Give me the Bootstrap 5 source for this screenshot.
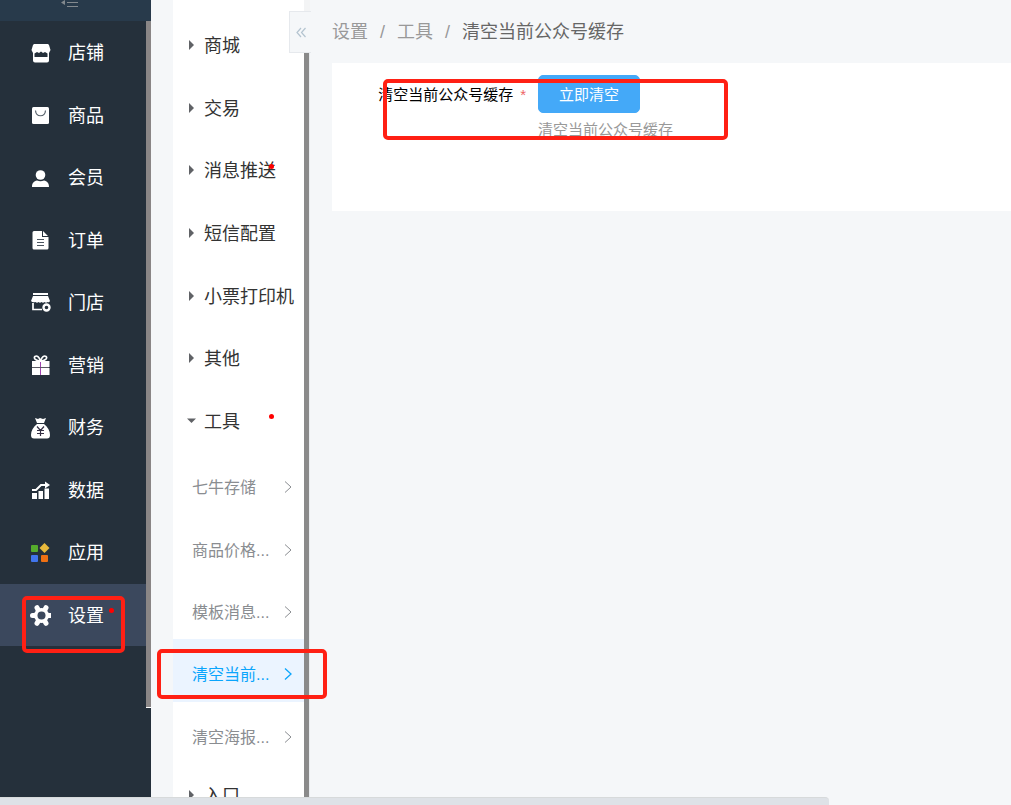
<!DOCTYPE html>
<html lang="zh-CN">
<head>
<meta charset="utf-8">
<meta name="viewport" content="width=device-width, initial-scale=1">
<title>清空当前公众号缓存</title>
<link href="https://cdn.jsdelivr.net/npm/bootstrap@5.3.0/dist/css/bootstrap.min.css" rel="stylesheet">
<style>
body{font-family:"Liberation Sans","Noto Sans CJK SC",sans-serif;background:#f5f7f9;font-size:18px;line-height:24px}
a{text-decoration:none}
.side{width:146px;background:#25303b}
.side-top{height:21px;background:#283a4b}
.side-top button{display:block;margin-left:61px;line-height:0}
.side-menu{display:grid;grid-auto-rows:1fr;height:625px}
.side-menu a{color:#fff;padding:2px 0 0 30px;gap:17px}
.side-menu a.active{background:#3b485d}
.side-menu svg{width:21px;height:21px;flex:none}
.track{width:5px;flex:none;background:#25303b}
.track-top{height:21px;background:#283a4b}
.thumb{height:687px;background:#8a8686;border-bottom:1px solid #fff}
.submenu{width:131px;margin-left:22px;background:#fff;padding-top:14px}
.groups,.tools{display:grid;grid-auto-rows:1fr}
.groups{height:438px}
.tools{height:312px}
.last-group{height:62px}
.group-link{color:#333;padding:2px 0 0 14px;gap:8px;white-space:nowrap}
.group-link svg{width:9px;height:10px;flex:none;margin-bottom:2px}
.tools a{color:#8a8d91;font-size:16px;padding:10px 11px 0 19px;white-space:nowrap}
.tools a.active{background:#ebf4ff;color:#0aa5fc}
.tools svg{width:10px;height:14px;flex:none;margin-bottom:2px}
.sub-track{width:6px;flex:none;background:linear-gradient(to right,#8a8a8a 5px,#e9ecef 5px)}
.sub-track-top{height:53px;background:#f3f4f5}
.collapse-btn{position:absolute;left:289px;top:11px;width:22px;height:42px;background:#f5f7f9;border:1px solid #e6e9ed;border-right:0}
.dot{position:absolute;width:5px;height:5px;border-radius:50%;background:red}
.side-menu .dot{left:109px;top:24px}
.groups .dot{left:96px;top:25px}
.callout{position:absolute;border:4px solid #ff2014;border-radius:5px;pointer-events:none;z-index:3}
.callout-side{left:22px;top:12px;width:103px;height:57px}
.callout-sub{left:-16px;top:10px;width:170px;height:50px}
.callout-form{left:51px;top:16px;width:345px;height:61px}
.content-area{margin-left:22px}
.crumbs{height:63px;--bs-breadcrumb-divider-color:#999;--bs-breadcrumb-item-padding-x:12px}
.crumbs a{color:#999}
.crumbs .active{color:#666}
.panel{background:#fff;height:148px;padding-top:12px}
.form-line{font-size:15px;line-height:22px}
.form-name{width:206px;padding:9px 12px 0 0;text-align:right;color:#000}
.star{color:#e66;font-size:15px;margin-left:7px}
.btn-clear{--bs-btn-bg:#44a9f8;--bs-btn-color:#fff;--bs-btn-border-color:#44a9f8;--bs-btn-hover-bg:#3b9ce8;--bs-btn-hover-color:#fff;--bs-btn-font-size:15px;--bs-btn-line-height:22px;--bs-btn-border-radius:5px;padding:8px 20px 6px 20px}
.hint{color:#999;margin-top:6px}
.page-scroll{height:8px;flex:none}
.page-scroll div{width:82%;height:8px;background:#dee2e7;border-top:1px solid #d7dadb;border-top-right-radius:4px}
</style>
</head>
<body>
<div class="vh-100 d-flex flex-column overflow-hidden">
<div class="d-flex flex-grow-1 overflow-hidden position-relative">
  <nav class="side flex-shrink-0" aria-label="主菜单">
    <div class="side-top"><button class="btn p-0 border-0" aria-label="收起菜单"><svg width="18" height="8" fill="none" stroke="#83898e"><path d="M4 0v5L0 2.500z" fill="#83898e" stroke="none"/><path d="M6 2.500h11M6 6.500h11"/></svg></button></div>
    <div class="side-menu">
      <a href="#" class="d-flex align-items-center"><svg viewBox="0 0 21 21"><path fill="#fff" d="M4 1h14l1 1 1.500 5-1.500 3v7.500q0 2-2 2H5q-2 0-2-2V10L1.500 7 3 2z"/><path fill="#25303b" d="M4.500 10.500L7 9l2 1 2-1.500 2 1.500 2-1 2.500 1.500v3.500h-13z"/></svg>店铺</a>
      <a href="#" class="d-flex align-items-center"><svg viewBox="0 0 21 21"><rect x="2" y="2" width="17" height="17" rx="1.500" fill="#fff"/><path d="M5.500 5.500c.5 7 9.500 7 10 0" fill="none" stroke="#59636c" stroke-width="1.200"/></svg>商品</a>
      <a href="#" class="d-flex align-items-center"><svg viewBox="0 0 21 21" fill="#fff"><circle cx="10.500" cy="7" r="4.800"/><path d="M2 19c0-4 2-6 5-6.500q3.500 1.500 7 0c3 .5 5 2.500 5 6.500z"/></svg>会员</a>
      <a href="#" class="d-flex align-items-center"><svg viewBox="0 0 21 21"><path fill="#fff" d="M4 1h8v6h6.500v11q0 1.500-1.500 1.500H4Q2.500 19.500 2.500 18V2.500Q2.500 1 4 1zM13 1l5 5h-5z"/><path d="M7 9.500h7M7 12.500h7M7 15.500h7" stroke="#4b5560" stroke-width="1.200"/></svg>订单</a>
      <a href="#" class="d-flex align-items-center"><svg viewBox="0 0 21 21"><path fill="#fff" d="M3 0h15v2H3zM3 3h15l2 5q-1 2-2.500 1-1.500 1.500-3 0-1.500 1.500-3 0-1.500 1.500-3 0-1.500 1.500-3 0-3 1-4.500-1z"/><path d="M3 10v6.500h9" fill="none" stroke="#fff" stroke-width="1.700"/><circle cx="16.500" cy="14.500" r="3" fill="#25303b" stroke="#fff" stroke-width="2.400"/></svg>门店</a>
      <a href="#" class="d-flex align-items-center"><svg viewBox="0 0 21 21"><path fill="#fff" d="M2 6h17.500v6H2zM2 13h17.500v7H2z"/><path d="M10.500 6C9 2 7 0 5 1.500S6 6 10.500 6C12 2 14 0 16 1.500S15 6 10.500 6" fill="none" stroke="#fff" stroke-width="1.600"/><path d="M10.500 7v13" stroke="#a044b0"/><path d="M2 12.500h17" stroke="#5a5962"/></svg>营销</a>
      <a href="#" class="d-flex align-items-center"><svg viewBox="0 0 21 21"><path fill="#fff" d="M5 0l3 1 2-1 3 1 3-1-2 5H7zM7 6h7c4 3 6 7 6 11q0 3.500-3 3.500H4q-3 0-3-3.500c0-4 2-8 6-11z"/><path d="M7 8.500l3.500 4 3.500-4M10.500 12.500V18M7 12.500h7M7 15.500h7" fill="none" stroke="#343044" stroke-width="1.200"/></svg>财务</a>
      <a href="#" class="d-flex align-items-center"><svg viewBox="0 0 21 21"><path fill="#fff" d="M2 13h5v6H2zM8.500 11h4.500v8H8.500zM14.500 8.500h4.500V19h-4.500z"/><path d="M2 10h4l5-5h5" fill="none" stroke="#fff" stroke-width="2"/><path d="M15 1.500L20 5l-5 3.500z" fill="#fff"/></svg>数据</a>
      <a href="#" class="d-flex align-items-center"><svg viewBox="0 0 21 21"><rect x="1" y="2" width="7" height="7" rx="1" fill="#55ab2c"/><rect x="1" y="12" width="7" height="7" rx="1" fill="#4175ec"/><rect x="11" y="12" width="7" height="7" rx="1" fill="#ef7013"/><path d="M14.500 0l5 5-5 5-5-5z" fill="#e8b93c"/></svg>应用</a>
      <a href="#" class="active d-flex align-items-center position-relative"><svg viewBox="0 0 21 21"><path d="M2.500 10.500h18M7 2.700l9 15.600M16 2.700L7 18.300" stroke="#fff" stroke-width="5" stroke-linecap="round"/><circle cx="11.500" cy="10.500" r="7.500" fill="#fff"/><circle cx="11.500" cy="10.500" r="4" fill="#3b485d"/></svg>设置<span class="dot"></span><span class="callout callout-side"></span></a>
    </div>
  </nav>
  <div class="track"><div class="track-top"></div><div class="thumb"></div></div>
  <nav class="submenu flex-shrink-0" aria-label="设置菜单">
    <div class="groups">
      <a href="#" class="group-link d-flex align-items-center"><svg viewBox="0 0 9 10"><path d="M2 0l5 5-5 5z" fill="#606266"/></svg>商城</a>
      <a href="#" class="group-link d-flex align-items-center"><svg viewBox="0 0 9 10"><path d="M2 0l5 5-5 5z" fill="#606266"/></svg>交易</a>
      <a href="#" class="group-link d-flex align-items-center position-relative"><svg viewBox="0 0 9 10"><path d="M2 0l5 5-5 5z" fill="#606266"/></svg>消息推送<span class="dot"></span></a>
      <a href="#" class="group-link d-flex align-items-center"><svg viewBox="0 0 9 10"><path d="M2 0l5 5-5 5z" fill="#606266"/></svg>短信配置</a>
      <a href="#" class="group-link d-flex align-items-center"><svg viewBox="0 0 9 10"><path d="M2 0l5 5-5 5z" fill="#606266"/></svg>小票打印机</a>
      <a href="#" class="group-link d-flex align-items-center"><svg viewBox="0 0 9 10"><path d="M2 0l5 5-5 5z" fill="#606266"/></svg>其他</a>
      <a href="#" class="group-link d-flex align-items-center position-relative"><svg viewBox="0 0 9 10"><path d="M0 2.500h9L4.500 7z" fill="#606266"/></svg>工具<span class="dot"></span></a>
    </div>
    <div class="tools">
      <a href="#" class="d-flex align-items-center justify-content-between">七牛存储<svg viewBox="0 0 10 14" fill="none" stroke="currentColor"><path d="M2 1.500L8 7l-6 5.500"/></svg></a>
      <a href="#" class="d-flex align-items-center justify-content-between">商品价格...<svg viewBox="0 0 10 14" fill="none" stroke="currentColor"><path d="M2 1.500L8 7l-6 5.500"/></svg></a>
      <a href="#" class="d-flex align-items-center justify-content-between">模板消息...<svg viewBox="0 0 10 14" fill="none" stroke="currentColor"><path d="M2 1.500L8 7l-6 5.500"/></svg></a>
      <a href="#" class="active d-flex align-items-center justify-content-between position-relative">清空当前...<svg viewBox="0 0 10 14" fill="none" stroke="currentColor" stroke-width="1.300"><path d="M2 1.500L8 7l-6 5.500"/></svg><span class="callout callout-sub"></span></a>
      <a href="#" class="d-flex align-items-center justify-content-between">清空海报...<svg viewBox="0 0 10 14" fill="none" stroke="currentColor"><path d="M2 1.500L8 7l-6 5.500"/></svg></a>
    </div>
    <a href="#" class="group-link last-group d-flex align-items-center"><svg viewBox="0 0 9 10"><path d="M2 0l5 5-5 5z" fill="#606266"/></svg>入口</a>
  </nav>
  <div class="sub-track"><div class="sub-track-top"></div></div>
  <button class="collapse-btn p-0 d-flex align-items-center justify-content-center" aria-label="收起子菜单"><svg width="10" height="11" fill="none" stroke="#b4c4d0" stroke-width="1.200"><path d="M5 1L1 5.500 5 10M9.500 1l-4 4.500 4 4.500"/></svg></button>
  <main class="content-area flex-grow-1">
    <nav aria-label="面包屑"><ol class="crumbs breadcrumb m-0 align-items-center flex-nowrap">
      <li class="breadcrumb-item"><a href="#">设置</a></li>
      <li class="breadcrumb-item"><a href="#">工具</a></li>
      <li class="breadcrumb-item active" aria-current="page">清空当前公众号缓存</li>
    </ol></nav>
    <section class="panel position-relative">
      <div class="form-line d-flex">
        <label class="form-name flex-shrink-0" for="clear">清空当前公众号缓存<span class="star">*</span></label>
        <div>
          <button id="clear" type="button" class="btn btn-clear d-block">立即清空</button>
          <div class="hint">清空当前公众号缓存</div>
        </div>
      </div>
      <span class="callout callout-form"></span>
    </section>
  </main>
</div>
<div class="page-scroll"><div></div></div>
</div>
<script src="https://cdn.jsdelivr.net/npm/bootstrap@5.3.0/dist/js/bootstrap.bundle.min.js"></script>
</body>
</html>
